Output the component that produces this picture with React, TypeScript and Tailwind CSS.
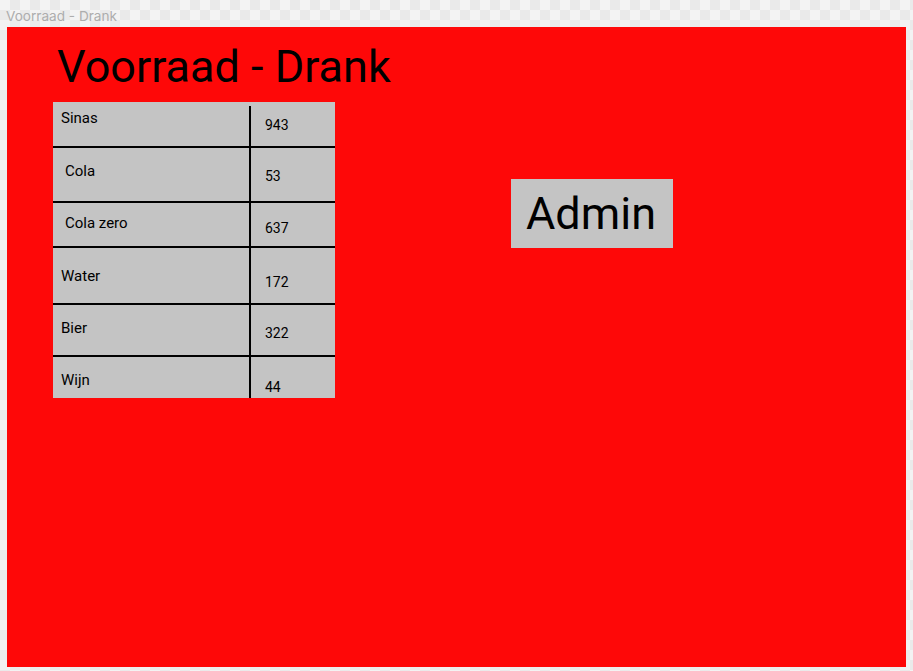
import React from "react";

type Drink = {
	name: string;
	amount: number;
	height: string;
	nameClass: string;
	amountClass: string;
	border: boolean;
};

const drinks: Drink[] = [
	{ name: "Sinas", amount: 943, height: "h-[44px]", nameClass: "pl-2 pt-[6px]", amountClass: "pt-[13px]", border: true },
	{ name: "Cola", amount: 53, height: "h-[53px]", nameClass: "pl-3 pt-[13px]", amountClass: "pt-[18px]", border: true },
	{ name: "Cola zero", amount: 637, height: "h-[43px]", nameClass: "pl-3 pt-[10px]", amountClass: "pt-[15px]", border: true },
	{ name: "Water", amount: 172, height: "h-[55px]", nameClass: "pl-2 pt-[18px]", amountClass: "pt-[24px]", border: true },
	{ name: "Bier", amount: 322, height: "h-[50px]", nameClass: "pl-2 pt-[13px]", amountClass: "pt-[18px]", border: true },
	{ name: "Wijn", amount: 44, height: "h-[41px]", nameClass: "pl-2 pt-[13px]", amountClass: "pt-[20px]", border: false },
];

const StockRow: React.FC<{ drink: Drink; first: boolean }> = ({ drink, first }) => (
	<div className={drink.border ? "border-b-2 border-black" : ""}>
		<div className={`flex ${drink.height}`}>
			<div className={`w-[196px] text-[15px] leading-5 ${drink.nameClass}`}>{drink.name}</div>
			<div className={`w-[2px] bg-black ${first ? "mt-1" : ""}`} />
			<div className={`flex-1 pl-[14px] text-sm leading-5 ${drink.amountClass}`}>{drink.amount}</div>
		</div>
	</div>
);

export default function App() {
	return (
		<div className="min-h-screen w-full bg-[#f0f0f0] bg-[image:repeating-conic-gradient(#eaeaea_0_25%,#f3f3f3_0_50%)] bg-[length:20px_20px] font-['Roboto',sans-serif] text-black">
			<div className="pl-[6px] pt-[8px] h-[27px] font-['Inter',sans-serif] text-[13.6px] leading-[16px] text-[#adadad]">
				Voorraad - Drank
			</div>
			<div className="ml-[7px] w-[899px] h-[640px] bg-[#fe0808]">
				<h1 className="pl-[50px] pt-[17px] text-[45px] leading-[45px] font-normal">
					Voorraad - Drank
				</h1>
				<div className="mt-[13px] flex items-start">
					<div className="ml-[46px] w-[282px] bg-[#c4c4c4]">
						{drinks.map((drink, i) => (
							<StockRow key={drink.name} drink={drink} first={i === 0} />
						))}
					</div>
					<button className="ml-[176px] mt-[77px] h-[69px] w-[162px] bg-[#c4c4c4] pl-[15px] text-left text-[45px] leading-none">
						Admin
					</button>
				</div>
			</div>
		</div>
	);
}
